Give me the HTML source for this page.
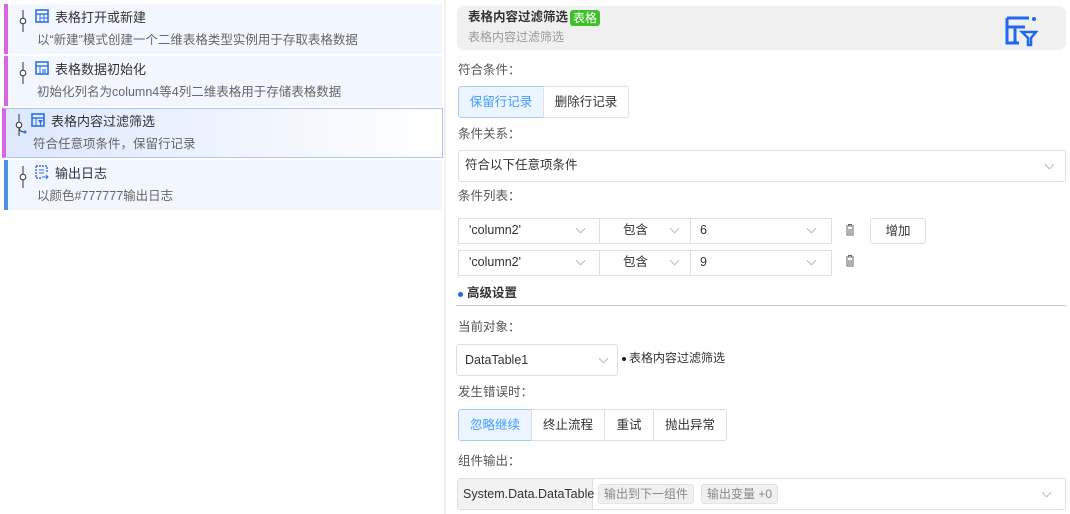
<!DOCTYPE html>
<html><head><meta charset="utf-8"><style>
*{box-sizing:border-box;margin:0;padding:0}
body{width:1070px;height:514px;background:#fff;font-family:"Liberation Sans","Noto Sans CJK SC",sans-serif;font-size:12px;line-height:1.25;color:#333;position:relative;overflow:hidden}
.a{position:absolute}
.item{position:absolute;left:4px;width:438px;height:50px;background:#f2f6fe;border-left:4px solid #d966e0}
.item .t{position:absolute;left:47px;top:6px;font-size:13px;color:#333}
.item .d{position:absolute;left:29px;top:29px;font-size:12.5px;color:#666}
.item .ic{position:absolute;left:27px;top:5px}
.item .pin{position:absolute;left:10px;top:6px}
.lbl{position:absolute;left:458px;font-size:12.5px;color:#555}
.box{position:absolute;border:1px solid #dcdfe6;background:#fff;border-radius:3px}
.chev{position:absolute;width:7px;height:7px;border-right:1px solid #bbb;border-bottom:1px solid #bbb;transform:rotate(45deg)}
.btn{position:absolute;border:1px solid #dcdfe6;background:#fff;font-size:12.5px;color:#333;text-align:center}
.sel{background:#ecf4ff;color:#409eff;border-color:#a3cdfd}
</style></head><body>
<div class="a" style="left:444px;top:0;width:2px;height:514px;background:#f0f0f0"></div>

<div class="item" style="top:4px">
<svg class="pin" width="10" height="22"><line x1="5" y1="0" x2="5" y2="22" stroke="#333"/><circle cx="5" cy="11" r="2.8" fill="#fff" stroke="#333"/></svg>
<svg class="ic" width="14" height="14"><rect x="1" y="1" width="12" height="12" fill="none" stroke="#2f6fe8" stroke-width="1.6"/><line x1="1" y1="5" x2="13" y2="5" stroke="#2f6fe8" stroke-width="1.4"/><line x1="5" y1="5" x2="5" y2="13" stroke="#2f6fe8"/><line x1="9" y1="5" x2="9" y2="13" stroke="#2f6fe8"/><line x1="5" y1="9" x2="13" y2="9" stroke="#2f6fe8"/></svg>
<div class="t">表格打开或新建</div><div class="d">以“新建”模式创建一个二维表格类型实例用于存取表格数据</div></div>

<div class="item" style="top:56px">
<svg class="pin" width="10" height="22"><line x1="5" y1="0" x2="5" y2="22" stroke="#333"/><circle cx="5" cy="11" r="2.8" fill="#fff" stroke="#333"/></svg>
<svg class="ic" width="14" height="14"><rect x="1" y="1" width="12" height="12" fill="none" stroke="#2f6fe8" stroke-width="1.6"/><line x1="1" y1="5" x2="13" y2="5" stroke="#2f6fe8" stroke-width="1.4"/><line x1="5" y1="5" x2="5" y2="13" stroke="#2f6fe8"/><rect x="7" y="8" width="4" height="4" fill="#7aa8f5"/></svg>
<div class="t">表格数据初始化</div><div class="d">初始化列名为column4等4列二维表格用于存储表格数据</div></div>

<div class="item" style="top:108px;left:2px;width:441px;height:50px;border:1px solid #a9c6fb;border-left:4px solid #d966e0;background:linear-gradient(90deg,#dde8fd,#fff)">
<svg class="pin" width="14" height="26" style="left:8px;top:5px"><line x1="5" y1="0" x2="5" y2="22" stroke="#333"/><circle cx="5" cy="11" r="2.8" fill="#fff" stroke="#333"/><path d="M5 14 Q6 18 10 18" fill="none" stroke="#333"/><circle cx="11" cy="18" r="1.5" fill="#2f6fe8"/></svg>
<svg class="ic" width="14" height="14" style="left:25px;top:4px"><rect x="1" y="1" width="12" height="12" fill="none" stroke="#2f6fe8" stroke-width="1.6"/><line x1="1" y1="5" x2="13" y2="5" stroke="#2f6fe8" stroke-width="1.4"/><line x1="5" y1="5" x2="5" y2="13" stroke="#2f6fe8"/><path d="M7 7h5l-2 3v3h-1v-3z" fill="#2f6fe8"/></svg>
<div class="t" style="left:45px;top:5px">表格内容过滤筛选</div><div class="d" style="left:27px;top:28px">符合任意项条件，保留行记录</div></div>

<div class="item" style="top:160px;border-left-color:#4a93e2">
<svg class="pin" width="10" height="22"><line x1="5" y1="0" x2="5" y2="22" stroke="#333"/><circle cx="5" cy="11" r="2.8" fill="#fff" stroke="#333"/></svg>
<svg class="ic" width="14" height="16"><path d="M1 1h11v7M1 1v12h5" fill="none" stroke="#2f6fe8" stroke-width="1.4" stroke-dasharray="2 1"/><line x1="4" y1="5" x2="9" y2="5" stroke="#2f6fe8"/><line x1="4" y1="8" x2="9" y2="8" stroke="#2f6fe8"/><path d="M7 12h6M11 10l2 2-2 2" fill="none" stroke="#2f6fe8"/></svg>
<div class="t">输出日志</div><div class="d">以颜色#777777输出日志</div></div>

<div class="a" style="left:457px;top:6px;width:609px;height:44px;background:#f0f0f0;border-radius:7px"></div>
<div class="a" style="left:468px;top:10px;font-size:12.5px;font-weight:bold;color:#333">表格内容过滤筛选</div>
<div class="a" style="left:570px;top:10px;background:#3fbf2a;color:#fff;font-size:12px;padding:0 3px;height:16px;line-height:16px;border-radius:3px">表格</div>
<div class="a" style="left:468px;top:30px;font-size:12px;color:#999">表格内容过滤筛选</div>
<svg class="a" style="left:1004px;top:15px" width="34" height="32"><path d="M3 3v25h12M3 3h22M3 12h18M11 12v15" fill="none" stroke="#1f68f0" stroke-width="3"/><circle cx="30" cy="4" r="2" fill="#1f68f0"/><path d="M18 17h14l-5 6v7h-3v-7z" fill="none" stroke="#1f68f0" stroke-width="2.5"/></svg>

<div class="lbl" style="top:63px">符合条件：</div>
<div class="btn sel" style="left:458px;top:86px;width:86px;height:32px;line-height:30px;border-radius:3px 0 0 3px">保留行记录</div>
<div class="btn" style="left:543px;top:86px;width:86px;height:32px;line-height:30px;border-radius:0 3px 3px 0">删除行记录</div>

<div class="lbl" style="top:127px">条件关系：</div>
<div class="box" style="left:458px;top:150px;width:608px;height:32px"><span class="a" style="left:6px;top:7px;font-size:12.5px">符合以下任意项条件</span><span class="chev" style="right:12px;top:10px"></span></div>

<div class="lbl" style="top:189px">条件列表：</div>
<div class="box" style="left:458px;top:218px;width:374px;height:26px;border-radius:0"></div>
<div class="a" style="left:599px;top:218px;width:1px;height:26px;background:#dcdfe6"></div>
<div class="a" style="left:690px;top:218px;width:1px;height:26px;background:#dcdfe6"></div>
<span class="a" style="left:469px;top:223px;font-size:12.5px">'column2'</span><span class="chev" style="left:577px;top:225px"></span>
<span class="a" style="left:623px;top:223px;font-size:12.5px">包含</span><span class="chev" style="left:671px;top:225px"></span>
<span class="a" style="left:700px;top:223px;font-size:12.5px">6</span><span class="chev" style="left:808px;top:225px"></span>
<div class="box" style="left:458px;top:250px;width:374px;height:26px;border-radius:0"></div>
<div class="a" style="left:599px;top:250px;width:1px;height:26px;background:#dcdfe6"></div>
<div class="a" style="left:690px;top:250px;width:1px;height:26px;background:#dcdfe6"></div>
<span class="a" style="left:469px;top:255px;font-size:12.5px">'column2'</span><span class="chev" style="left:577px;top:257px"></span>
<span class="a" style="left:623px;top:255px;font-size:12.5px">包含</span><span class="chev" style="left:671px;top:257px"></span>
<span class="a" style="left:700px;top:255px;font-size:12.5px">9</span><span class="chev" style="left:808px;top:257px"></span>
<svg class="a" style="left:845px;top:224px" width="10" height="12"><path d="M1 2h8M3.5 2V0.5h3V2M2 3v8h6V3M4 5v5M6 5v5" fill="none" stroke="#666"/></svg>
<svg class="a" style="left:845px;top:255px" width="10" height="12"><path d="M1 2h8M3.5 2V0.5h3V2M2 3v8h6V3M4 5v5M6 5v5" fill="none" stroke="#666"/></svg>
<div class="btn" style="left:870px;top:218px;width:56px;height:26px;line-height:24px;border-radius:3px">增加</div>

<div class="a" style="left:458px;top:292px;width:5px;height:5px;border-radius:50%;background:#1f68f0"></div>
<div class="a" style="left:467px;top:286px;font-size:12.5px;font-weight:bold;color:#333">高级设置</div>
<div class="a" style="left:456px;top:305px;width:610px;height:1px;background:#ccc"></div>

<div class="lbl" style="top:320px">当前对象：</div>
<div class="box" style="left:456px;top:344px;width:162px;height:32px"><span class="a" style="left:8px;top:8px;font-size:12.5px">DataTable1</span><span class="chev" style="right:10px;top:10px"></span></div>
<div class="a" style="left:622px;top:357px;width:4px;height:4px;border-radius:50%;background:#222"></div>
<div class="a" style="left:629px;top:351px;font-size:12px">表格内容过滤筛选</div>

<div class="lbl" style="top:385px">发生错误时：</div>
<div class="btn sel" style="left:458px;top:409px;width:74px;height:32px;line-height:30px;border-radius:3px 0 0 3px">忽略继续</div>
<div class="btn" style="left:531px;top:409px;width:74px;height:32px;line-height:30px">终止流程</div>
<div class="btn" style="left:604px;top:409px;width:50px;height:32px;line-height:30px">重试</div>
<div class="btn" style="left:653px;top:409px;width:74px;height:32px;line-height:30px;border-radius:0 3px 3px 0">抛出异常</div>

<div class="lbl" style="top:454px">组件输出：</div>
<div class="box" style="left:457px;top:478px;width:609px;height:32px"></div>
<div class="a" style="left:458px;top:479px;width:135px;height:30px;background:#f2f2f2;border-right:1px solid #dcdfe6;font-size:12.5px;line-height:30px;padding-left:5px">System.Data.DataTable</div>
<div class="a" style="left:598px;top:484px;height:20px;line-height:18px;padding:0 5px;background:#f0f0f0;border:1px solid #e3e3e3;border-radius:3px;color:#888;font-size:12px">输出到下一组件</div>
<div class="a" style="left:701px;top:484px;height:20px;line-height:18px;padding:0 5px;background:#f0f0f0;border:1px solid #e3e3e3;border-radius:3px;color:#888;font-size:12px">输出变量 +0</div>
<span class="chev" style="left:1043px;top:489px"></span>
</body></html>
